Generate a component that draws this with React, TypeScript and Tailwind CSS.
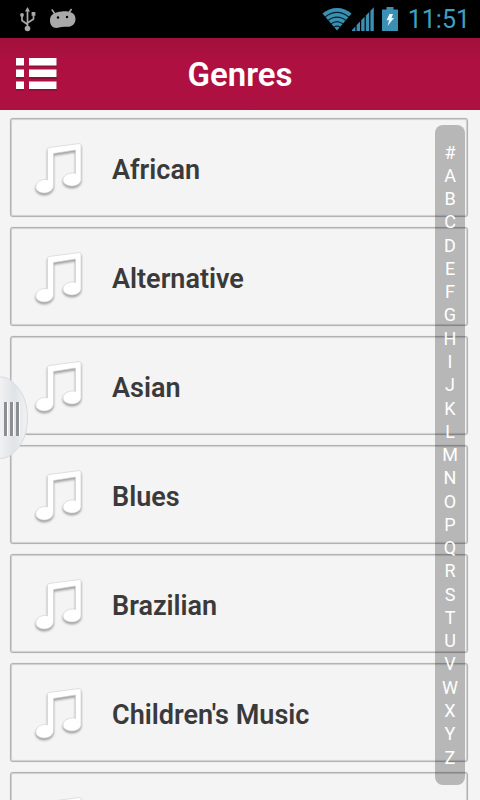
import { useState } from "react";

const genres = [
  "African",
  "Alternative",
  "Asian",
  "Blues",
  "Brazilian",
  "Children's Music",
  "Classical",
];

const letters = "#ABCDEFGHIJKLMNOPQRSTUVWXYZ".split("");

/* ===============================
   ICONS
=============================== */

function UsbIcon() {
  return (
    <svg width="18" height="26" viewBox="0 0 18 26" fill="none" stroke="#a9a9a9" strokeWidth="1.7">
      <path d="M8.5 4v17M8.5 18.500 L3 14.500V9M8.5 17 L14.5 13V8" />
      <path d="M8.5 1 L11 5.5H6Z" fill="#a9a9a9" stroke="none" />
      <circle cx="8.5" cy="22.5" r="2.8" fill="#a9a9a9" stroke="none" />
      <circle cx="3" cy="9" r="1.9" fill="#a9a9a9" stroke="none" />
      <path d="M12.6 6h3.8v3.8h-3.8z" fill="#a9a9a9" stroke="none" />
    </svg>
  );
}

function JellyBeanIcon() {
  return (
    <svg width="28" height="22" viewBox="0 0 28 22" fill="#a9a9a9">
      <path d="M2.8 1.5 6 6M22.6 1 20 4.5" stroke="#a9a9a9" strokeWidth="1.6" />
      <path d="M1 11.5C1.5 6 6 4 13 3.4C20 2.8 26.5 4.500 26.500 11C26.500 16 23 19 18 18.800C15 18.600 12.500 18.600 10 19.600C5 21.300 .4 17.500 1 11.500Z" />
      <circle cx="9" cy="9.500" r="1.2" fill="#000" />
      <circle cx="18" cy="9" r="1.2" fill="#000" />
    </svg>
  );
}

function WifiIcon() {
  return (
    <svg width="30" height="24" viewBox="0 0 32 24" preserveAspectRatio="none" fill="#3a90b2">
      <path d="M.5 6.5C9 -1 23 -1 31.5 6.5L16 23.5Z" />
      <path
        d="M3.500 10C11 3.800 21 3.800 28.500 10M6.500 13.500C12 9 20 9 25.500 13.500M9.500 17C13.500 14 18.500 14 22.500 17M12.500 20.200C15 18.700 17 18.700 19.500 20.200"
        fill="none"
        stroke="#06202b"
        strokeWidth="1.1"
      />
    </svg>
  );
}

function SignalIcon() {
  return (
    <svg width="22" height="24" viewBox="0 0 22 24" fill="#3a90b2">
      <path d="M0 24V23L3.400 19.400V24ZM4.600 24V18.100L8 14.500V24ZM9.200 24V13.300L12.600 9.700V24ZM13.800 24V8.500L17.200 4.900V24ZM18.400 24V3.700L21.800 .2V24Z" />
    </svg>
  );
}

function BatteryIcon() {
  return (
    <svg width="16" height="24" viewBox="0 0 16 24">
      <path d="M4.5 0h7v2.5H16V24H0V2.5h4.5z" fill="#3a90b2" />
      <path d="M7.500 7H11L9.500 11H12L5.500 19 7.200 13.200H4.500Z" fill="#e8f8ff" />
    </svg>
  );
}

function MenuIcon() {
  return (
    <svg width="42" height="34" viewBox="0 0 42 34">
      <path
        d="M1 2h8v8H1zM14 2h28v8H14zM1 14h8v8H1zM14 14h28v8H14zM1 26h8v8H1zM14 26h28v8H14z"
        fill="#6d1030"
        opacity=".5"
      />
      <path
        d="M1 1h8v7.500H1zM14 1h27.500v7.500H14zM1 12.500h8v7.500H1zM14 12.500h27.500v7.500H14zM1 24.500h8v7.500H1zM14 24.500h27.500v7.500H14z"
        fill="#fff"
      />
    </svg>
  );
}

function NoteIcon() {
  return (
    <svg
      width="48"
      height="54"
      viewBox="0 0 48 54"
      className="drop-shadow-[0_2px_1px_rgba(0,0,0,0.35)]"
    >
      <path
        d="M12.5 6.2Q12.5 4.8 14 4.5L44 .6Q46 .5 46 2V36.5C46 40.5 41.5 43 37 43C32 43 28 40.500 28 37C28 33 32.500 30 37.500 30Q39.500 30 40.500 30.500V7L18.500 10.500V42.500C18.500 47 14 50 9.500 50C4.500 50 .8 47.500 .8 44C.8 40 5 36.500 9.500 36.500Q11.500 36.500 12.500 37Z"
        fill="#fff"
        stroke="#d4d4d4"
        strokeWidth=".7"
      />
    </svg>
  );
}

function DrawerHandle() {
  return (
    <svg width="29" height="84" viewBox="0 0 29 84">
      <defs>
        <linearGradient id="handle" x1="0" y1="0" x2="1" y2="0">
          <stop offset="0" stopColor="#f0f1f3" />
          <stop offset=".5" stopColor="#e0e3e6" />
          <stop offset="1" stopColor="#f1f2f4" />
        </linearGradient>
      </defs>
      <path
        d="M0 1C9 1 13 6 18 12C24 19 27.500 30 27.500 42C27.500 54 24 65 18 72C13 78 9 82 0 82.500"
        fill="url(#handle)"
        stroke="#d8dadc"
      />
      <path d="M4 26v34h3v-34zM10 26v34h3v-34zM16 26v34h3v-34z" fill="#8b8e92" />
      <path d="M7 26v34h1v-34zM13 26v34h1v-34zM19 26v34h1v-34z" fill="#fff" />
    </svg>
  );
}

export default function App() {
  const [selected, setSelected] = useState<string | null>(null);

  return (
    <div className="flex h-screen flex-col overflow-hidden bg-[#f4f4f4] font-['Roboto',sans-serif]">
      {/* STATUS BAR */}
      <div className="flex h-[38px] shrink-0 items-center justify-between bg-black pr-2.5 pl-[19px]">
        <div className="flex items-center gap-3">
          <UsbIcon />
          <JellyBeanIcon />
        </div>
        <div className="flex items-center">
          <WifiIcon />
          <SignalIcon />
          <div className="pr-2.5 pl-2">
            <BatteryIcon />
          </div>
          <time className="text-[25px] leading-none text-[#3f9fc4]">11:51</time>
        </div>
      </div>

      {/* HEADER */}
      <header className="grid h-[72px] shrink-0 grid-cols-[1fr_auto_1fr] items-center bg-linear-to-b from-[#a1103b] to-[#ae1041] to-30% px-[15px]">
        <button aria-label="Menu" className="w-fit">
          <MenuIcon />
        </button>
        <h1 className="pt-0.5 text-[33px] leading-10 font-semibold text-white">Genres</h1>
      </header>

      <main className="relative min-h-0 flex-1">
        {/* GENRES */}
        <ul className="flex h-full flex-col gap-2.5 overflow-hidden pt-2 pr-3 pl-2.5">
          {genres.map((genre) => (
            <li key={genre} className="shrink-0">
              <button
                onClick={() => setSelected(genre)}
                aria-pressed={selected === genre}
                className="flex h-[99px] w-full items-center gap-[29px] rounded-[3px] border border-[#b2b2b2] bg-[#f4f4f4] pt-1 pl-6 text-left text-[27px] leading-7 font-semibold text-[#3a3a3a] shadow-[inset_0_0_1px_1px_#d0d0d0,0_0_1px_#c0c0c0]"
              >
                <NoteIcon />
                <span>{genre}</span>
              </button>
            </li>
          ))}
        </ul>

        {/* ALPHABET INDEX */}
        <nav
          aria-label="Alphabet"
          className="absolute top-[15px] right-[15px] bottom-[15px] flex w-[30px] flex-col rounded-lg bg-black/25 py-4 text-center text-[18px] text-white"
        >
          {letters.map((letter) => (
            <a
              key={letter}
              href={`#${letter}`}
              className="flex min-h-0 flex-1 items-center justify-center leading-none"
            >
              {letter}
            </a>
          ))}
        </nav>

        {/* DRAWER HANDLE */}
        <button aria-label="Open drawer" className="absolute top-[266px] left-0">
          <DrawerHandle />
        </button>
      </main>
    </div>
  );
}
